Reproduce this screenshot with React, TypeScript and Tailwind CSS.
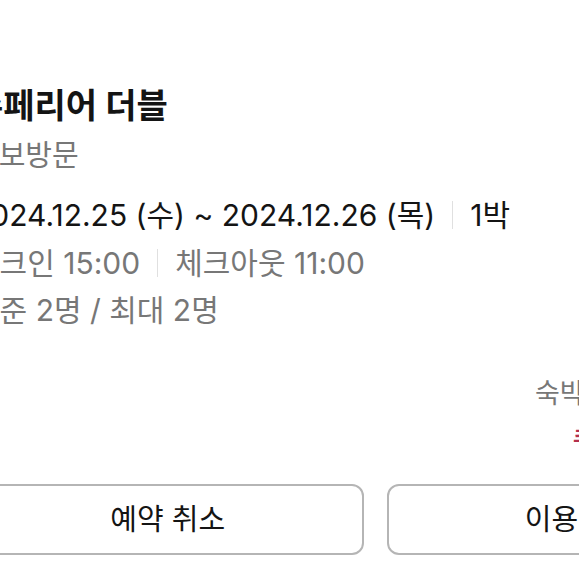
export default function App() {
  return (
    <div
      className="w-[579px] h-[579px] overflow-hidden bg-white"
      style={{ fontFamily: 'Inter, "Noto Sans CJK KR", sans-serif' }}
    >
      <div className="-ml-[28px] w-[804px] pt-[81px]">
        <h1 className="text-[34px] leading-[50px] font-bold text-[#141414] whitespace-nowrap">
          슈페리어 더블
        </h1>
        <p className="mt-[5px] text-[29px] leading-[40px] text-[#777777] whitespace-nowrap">
          도보방문
        </p>

        <div className="mt-[15px] flex items-center text-[30px] leading-[48px] text-[#141414] whitespace-nowrap">
          <span>2024.12.25 (수) ~ 2024.12.26 (목)</span>
          <span className="mx-[17px] h-[28px] w-px bg-[#e0e0e0]" />
          <span>1박</span>
        </div>
        <div className="flex items-center text-[30px] leading-[48px] text-[#777777] whitespace-nowrap">
          <span>체크인 15:00</span>
          <span className="mx-[17px] h-[28px] w-px bg-[#e0e0e0]" />
          <span>체크아웃 11:00</span>
        </div>
        <p className="text-[30px] leading-[47px] text-[#777777] whitespace-nowrap">
          기준 2명 / 최대 2명
        </p>

        <div className="mt-[40px] flex justify-end">
          <div className="w-[241px] flex flex-col items-start">
            <span className="text-[27px] leading-[40px] text-[#777777] whitespace-nowrap">
              숙박 결제금액
            </span>
            <span className="mt-[10px] ml-[38px] text-[22px] leading-[30px] font-semibold text-[#b3304d] whitespace-nowrap">
              쿠폰 할인 적용
            </span>
          </div>
        </div>

        <div className="mt-[30px] grid grid-cols-2 gap-[23px] w-[806px]">
          <button className="h-[71px] rounded-[12px] border-2 border-[#b5b5b5] bg-white text-[29px] text-[#141414]">
            예약 취소
          </button>
          <button className="h-[71px] rounded-[12px] border-2 border-[#b5b5b5] bg-white text-[29px] text-[#141414]">
            이용 안내
          </button>
        </div>
      </div>
    </div>
  );
}
